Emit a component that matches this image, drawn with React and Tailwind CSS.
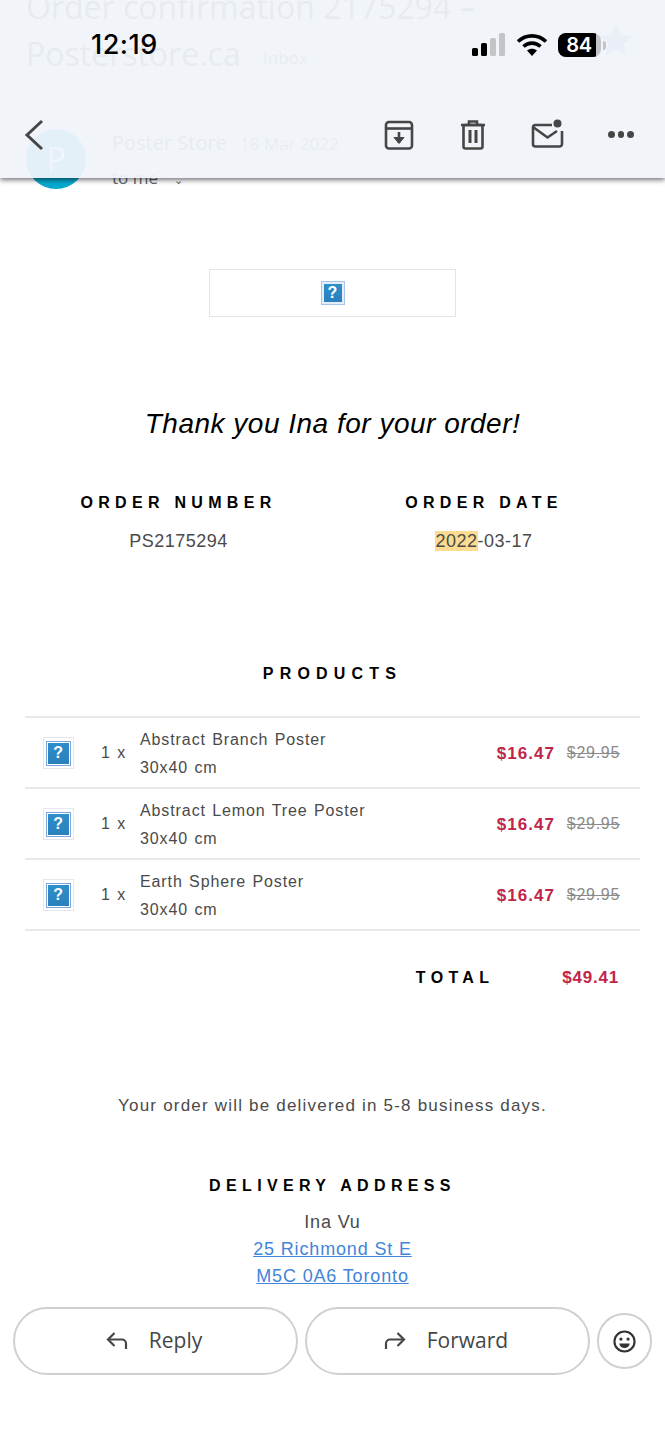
const Broken = ({ big }) => (
  <div className={big ? "w-[24px] h-[24px] border border-[#a9c4e4] p-[2px] bg-[#e4eefa]" : "w-[31px] h-[32px] border border-[#e6e6ec] flex items-center justify-center"}>
    <div className={big ? "w-full h-full bg-gradient-to-b from-[#2d8fcb] to-[#2a80bd] flex items-center justify-center text-white text-[16px] font-bold leading-none" : "w-[25px] h-[25px] border border-[#7fa6d8] p-[1px]"}>
      {big ? "?" : <div className="w-full h-full bg-gradient-to-b from-[#2d8fcb] to-[#2a80bd] flex items-center justify-center text-white text-[16px] font-bold leading-none">?</div>}
    </div>
  </div>
);

const Row = ({ name }) => (
  <div className="h-[71px] border-b-2 border-[#e9e9e9] flex items-center pt-[2px] pl-[18px] pr-[20px] text-[#4a4a4a] text-[16px] tracking-[0.9px] [word-spacing:1px]">
    <Broken />
    <div className="w-[39px] ml-[27px] whitespace-nowrap">1 x</div>
    <div className="flex-1 whitespace-nowrap leading-[28px] mt-[2px]">
      <div>{name}</div>
      <div>30x40 cm</div>
    </div>
    <div className="text-[#c0254a] font-bold text-[17px] tracking-[1px]">$16.47</div>
    <div className="ml-[12px] line-through text-[#8a8a8a] text-[16px] tracking-[0.7px]">$29.95</div>
  </div>
);

const Heading = ({ children, className = "" }) => (
  <div className={"text-black font-bold text-[16px] leading-[20px] whitespace-nowrap " + className}>{children}</div>
);

export default function App() {
  return (
    <div className="relative w-[665px] h-[1440px] overflow-hidden bg-white font-['Liberation_Sans',Arial,sans-serif]">
      {/* Email body, running under the translucent bar */}
      <div className="-mt-[17px]">
        <div className="relative pl-[26px] pr-[20px] text-[#3c4043] font-['Open_Sans',sans-serif]">
          <div className="text-[32px] leading-[47px] w-[520px] whitespace-nowrap">
            Order confirmation 2175294 –<br />
            Posterstore.ca <span className="text-[17px] ml-[14px] align-middle">Inbox</span>
          </div>
          <svg className="absolute right-[30px] top-[38px] w-[38px] h-[38px]" viewBox="0 0 24 24" fill="#7b87c8"><path d="M12 2l3 7 7.5.6-5.7 4.9 1.8 7.5L12 18l-6.6 4 1.8-7.5L1.500 9.600 9 9z" /></svg>
          <div className="flex mt-[48px] h-[60px]">
            <div className="w-[60px] h-[60px] rounded-full bg-[#07a9cf] text-white text-[32px] flex items-center justify-center">P</div>
            <div className="ml-[26px] text-[20px]">
              <div className="leading-[28px]">Poster Store <span className="text-[17px] ml-[8px] text-[#5f6368]">18 Mar 2022</span></div>
              <div className="text-[17px] leading-[24px] mt-[8px] text-[#5f6368]">to me <span className="ml-[12px] text-[11px]">⌄</span></div>
            </div>
          </div>
        </div>

        <div className="flex justify-center mt-[80px]">
          <div className="w-[247px] h-[48px] border border-[#e4e4e8] flex items-center justify-center"><Broken big /></div>
        </div>

        <div className="text-center italic text-black text-[28px] tracking-[0.5px] leading-[36px] mt-[89px]">Thank you Ina for your order!</div>

        <div className="flex mt-[51px] text-[#4a4a4a] text-[18px] tracking-[0.5px]">
          <div className="w-[357px] flex flex-col items-center">
            <Heading className="tracking-[5.3px]">ORDER NUMBER</Heading>
            <div className="mt-[16px] leading-[24px]">PS2175294</div>
          </div>
          <div className="w-[254px] flex flex-col items-center">
            <Heading className="tracking-[5.3px]">ORDER DATE</Heading>
            <div className="mt-[16px] leading-[24px]"><span className="bg-[#fbdc90]">2022</span>-03-17</div>
          </div>
        </div>

        <Heading className="text-center mt-[111px] tracking-[6.2px]">PRODUCTS</Heading>

        <div className="mx-[25px] w-[615px] mt-[32px] border-t-2 border-[#e9e9e9]">
          <Row name="Abstract Branch Poster" />
          <Row name="Abstract Lemon Tree Poster" />
          <Row name="Earth Sphere Poster" />
        </div>

        <div className="flex justify-end items-center mt-[37px] pr-[46px]">
          <Heading className="tracking-[5.3px]">TOTAL</Heading>
          <div className="ml-[68px] text-[#c0254a] font-bold text-[17px] tracking-[0.8px] leading-[20px]">$49.41</div>
        </div>

        <div className="text-center text-[#4a4a4a] text-[17px] tracking-[1.2px] leading-[24px] mt-[106px]">Your order will be delivered in 5-8 business days.</div>

        <Heading className="text-center mt-[58px] tracking-[5.35px]">DELIVERY ADDRESS</Heading>
        <div className="text-center text-[18px] tracking-[0.85px] leading-[27px] mt-[13px] text-[#4a4a4a]">
          <div>Ina Vu</div>
          <div className="text-[#4285d9] underline">25 Richmond St E</div>
          <div className="text-[#4285d9] underline">M5C 0A6 Toronto</div>
        </div>
      </div>

      {/* Translucent top bar */}
      <div className="absolute top-0 left-0 w-[665px] h-[178px] bg-[#f0f3f9]/95 shadow-[0_2px_5px_rgba(0,0,0,0.55)]">
        <div className="absolute left-[91px] top-[27px] text-[27px] leading-[36px] font-medium text-black font-['Inter',sans-serif] tracking-[0.5px]">12:19</div>
        <div className="absolute left-[471px] top-[33px] flex items-center">
          <svg className="w-[35px] h-[24px]" viewBox="0 0 35 24">
            <rect x="1" y="15" width="6" height="8" rx="1.500" fill="#000" />
            <rect x="10" y="10" width="6" height="13" rx="1.500" fill="#000" />
            <rect x="19" y="5" width="6" height="18" rx="1.500" fill="#c2c4c8" />
            <rect x="28" y="0" width="6" height="23" rx="1.500" fill="#c2c4c8" />
          </svg>
          <svg className="ml-[10px] w-[32px] h-[24px]" viewBox="0 0 32 24" fill="none" stroke="#000" strokeWidth="3.600">
            <path d="M2 8.500C10 1 22 1 30 8.500" />
            <path d="M7.500 13.500C12.500 9 19.500 9 24.500 13.500" />
            <path d="M16 23l-5-5.500C14 15 18 15 21 17.500z" fill="#000" stroke="none" />
          </svg>
          <div className="ml-[10px] relative w-[43px] h-[24px] rounded-[8px] bg-[#c2c4c8] overflow-hidden">
            <div className="absolute left-0 top-0 h-full w-[38px] bg-black flex items-center justify-center text-white text-[20px] font-semibold font-['Inter',sans-serif] tracking-[-0.3px] pl-[4px]">84</div>
          </div>
          <div className="ml-[2px] w-[3px] h-[9px] rounded-r-full bg-[#c2c4c8]" />
        </div>

        <svg className="absolute left-[24px] top-[119px] w-[20px] h-[32px]" viewBox="0 0 20 32" fill="none" stroke="#444746" strokeWidth="3"><path d="M18 2L3 16l15 14" /></svg>

        <svg className="absolute left-[384px] top-[120px] w-[30px] h-[30px]" viewBox="0 0 30 30" fill="none" stroke="#444746" strokeWidth="2.600">
          <rect x="2" y="2" width="26" height="26.500" rx="3" />
          <path d="M2 8.500h26" />
          <path d="M15 12v11" />
          <path d="M10 17.500h10L15 23.500z" fill="#444746" strokeWidth="1" />
        </svg>
        <svg className="absolute left-[460px] top-[120px] w-[26px] h-[30px]" viewBox="0 0 26 30" fill="none" stroke="#444746" strokeWidth="2.600">
          <path d="M1 5h24" />
          <path d="M9 4V1.500h8V4" />
          <rect x="3.500" y="5" width="19" height="23.500" rx="2" />
          <path d="M10 10v13M16 10v13" strokeWidth="3" />
        </svg>
        <svg className="absolute left-[531px] top-[119px] w-[34px] h-[30px]" viewBox="0 0 34 30" fill="none" stroke="#444746" strokeWidth="2.600">
          <path d="M21 6H4a2.500 2.500 0 0 0-2 2.500V25a2.500 2.500 0 0 0 2.500 2.500h24A2.500 2.500 0 0 0 31 25V12" />
          <path d="M2 8l14.500 10.500L26 12" />
          <circle cx="26.500" cy="4.500" r="4" fill="#444746" stroke="none" />
        </svg>
        <div className="absolute left-[608px] top-[131px] flex gap-[3px]">
          <div className="w-[6.500px] h-[6.500px] rounded-full bg-[#444746]" />
          <div className="w-[6.500px] h-[6.500px] rounded-full bg-[#444746]" />
          <div className="w-[6.500px] h-[6.500px] rounded-full bg-[#444746]" />
        </div>
      </div>

      {/* Bottom actions */}
      <div className="absolute left-0 top-[1296px] w-[665px] h-[144px] bg-white pt-[11px] pl-[13px] flex items-start gap-[7px] font-['Open_Sans',sans-serif] text-[#444746] text-[21px]">
        <div className="w-[285px] h-[68px] rounded-full border-2 border-[#d0d0d0] flex items-center justify-center pr-[4px]">
          <svg className="w-[24px] h-[24px] mr-[20px]" viewBox="0 0 24 24" fill="none" stroke="#444746" strokeWidth="2.200"><path d="M3 10.500h14a4 4 0 0 1 4 4V20" /><path d="M9.500 4L3 10.500 9.500 17" /></svg>
          Reply
        </div>
        <div className="w-[285px] h-[68px] rounded-full border-2 border-[#d0d0d0] flex items-center justify-center pr-[4px]">
          <svg className="w-[24px] h-[24px] mr-[20px]" viewBox="0 0 24 24" fill="none" stroke="#444746" strokeWidth="2.200"><path d="M21 10.500H7a4 4 0 0 0-4 4V20" /><path d="M14.500 4L21 10.500 14.500 17" /></svg>
          Forward
        </div>
        <div className="w-[55px] h-[56px] mt-[6px] rounded-full border-2 border-[#d0d0d0] flex items-center justify-center">
          <svg className="w-[23px] h-[23px]" viewBox="0 0 24 24" fill="none" stroke="#333" strokeWidth="2.200">
            <circle cx="12" cy="12" r="10.500" />
            <circle cx="8.300" cy="9.500" r="1.700" fill="#333" stroke="none" />
            <circle cx="15.700" cy="9.500" r="1.700" fill="#333" stroke="none" />
            <path d="M6.500 14h11c-.6 3-2.800 4.800-5.500 4.800S7.100 17 6.500 14z" fill="#333" stroke="none" />
          </svg>
        </div>
      </div>
    </div>
  );
}
